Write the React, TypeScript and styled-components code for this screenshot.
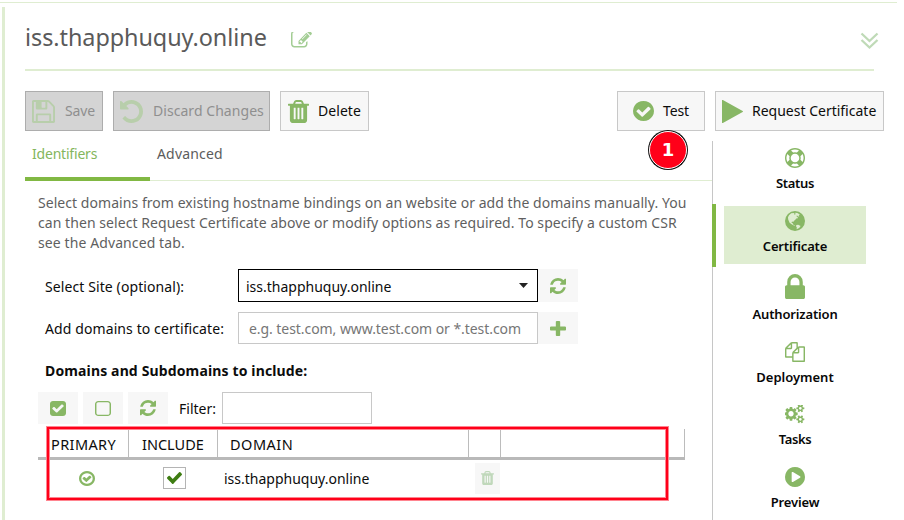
import React from 'react';
import styled, { createGlobalStyle } from 'styled-components';

const GREEN = '#88b765';
const PALE = '#dfedd1';

const GlobalStyle = createGlobalStyle`
  * { box-sizing: border-box; }
  body { margin: 0; background: #fff; overflow: hidden; }
`;

const icons = {
  edit: {
    box: '0 256 1792 1408',
    d: 'M888 1184l116-116-152-152-116 116v56h96v96h56zm440-720q-16-16-33 1l-350 350q-17 17-1 33t33-1l350-350q17-17 1-33zm80 594v190q0 119-84.5 203.5t-203.5 84.5h-832q-119 0-203.5-84.5t-84.5-203.5v-832q0-119 84.5-203.5t203.5-84.5h832q63 0 117 25 15 7 18 23 3 17-9 29l-49 49q-14 14-32 8-23-6-45-6h-832q-66 0-113 47t-47 113v832q0 66 47 113t113 47h832q66 0 113-47t47-113v-126q0-13 9-22l64-64q15-15 35-7t20 29zm-96-738l288 288-672 672h-288v-288zm444 132l-92 92-288-288 92-92q28-28 68-28t68 28l152 152q28 28 28 68t-28 68z',
  },
  save: {
    box: '128 128 1536 1536',
    d: 'M512 1536h768v-384h-768v384zm896 0h128v-896q0-14-10-38.5t-20-34.5l-281-281q-10-10-34-20t-39-10v416q0 40-28 68t-68 28h-576q-40 0-68-28t-28-68v-416h-128v1280h128v-416q0-40 28-68t68-28h832q40 0 68 28t28 68v416zm-384-928v-320q0-13-9.5-22.5t-22.5-9.5h-192q-13 0-22.5 9.5t-9.5 22.5v320q0 13 9.5 22.5t22.5 9.5h192q13 0 22.5-9.5t9.5-22.5zm640 32v928q0 40-28 68t-68 28h-1344q-40 0-68-28t-28-68v-1344q0-40 28-68t68-28h928q40 0 88 20t76 48l280 280q28 28 48 76t20 88z',
  },
  undo: {
    box: '128 128 1536 1536',
    d: 'M1664 896q0 156-61 298t-164 245-245 164-298 61q-172 0-327-72.5t-264-204.5q-7-10-6.5-22.5t8.5-20.5l137-138q10-9 25-9 16 2 23 12 73 95 179 147t225 52q104 0 198.5-40.5t163.5-109.5 109.5-163.5 40.5-198.5-40.5-198.5-109.5-163.5-163.5-109.5-198.5-40.5q-98 0-188 35.5t-160 101.5l137 138q31 30 14 69-17 40-59 40h-448q-26 0-45-19t-19-45v-448q0-42 40-59 39-17 69 14l130 129q107-101 244.5-156.5t284.5-55.5q156 0 298 61t245 164 164 245 61 298z',
  },
  trash: {
    box: '192 128 1408 1536',
    d: 'M704 1376v-704q0-14-9-23t-23-9h-64q-14 0-23 9t-9 23v704q0 14 9 23t23 9h64q14 0 23-9t9-23zm256 0v-704q0-14-9-23t-23-9h-64q-14 0-23 9t-9 23v704q0 14 9 23t23 9h64q14 0 23-9t9-23zm256 0v-704q0-14-9-23t-23-9h-64q-14 0-23 9t-9 23v704q0 14 9 23t23 9h64q14 0 23-9t9-23zm-544-992h448l-48-117q-7-9-17-11h-317q-10 2-17 11zm928 32v64q0 14-9 23t-23 9h-96v948q0 83-47 143.5t-113 60.5h-832q-66 0-113-58.5t-47-141.5v-952h-96q-14 0-23-9t-9-23v-64q0-14 9-23t23-9h309l70-167q15-37 54-63t79-26h320q40 0 79 26t54 63l70 167h309q14 0 23 9t9 23z',
  },
  checkCircle: {
    box: '128 128 1536 1536',
    d: 'M1412 734q0-28-18-46l-91-90q-19-19-45-19t-45 19l-408 407-226-226q-19-19-45-19t-45 19l-91 90q-18 18-18 46 0 27 18 45l362 362q19 19 45 19 27 0 46-19l543-543q18-18 18-45zm252 162q0 209-103 385.5t-279.5 279.5-385.5 103-385.5-103-279.5-279.5-103-385.5 103-385.5 279.5-279.5 385.5-103 385.5 103 279.5 279.5 103 385.5z',
  },
  play: {
    box: '192 128 1408 1536',
    d: 'M1576 927l-1328 738q-23 13-39.5 3t-16.5-36v-1472q0-26 16.5-36t39.5 3l1328 738q23 13 23 31t-23 31z',
  },
  lifeRing: {
    box: '0 0 1792 1792',
    d: 'M896 0q182 0 348 71t286 191 191 286 71 348-71 348-191 286-286 191-348 71-348-71-286-191-191-286-71-348 71-348 191-286 286-191 348-71zm0 128q-190 0-361 90l194 194q82-28 167-28t167 28l194-194q-171-90-361-90zm-678 1129l194-194q-28-82-28-167t28-167l-194-194q-90 171-90 361t90 361zm678 407q190 0 361-90l-194-194q-82 28-167 28t-167-28l-194 194q171 90 361 90zm0-384q159 0 271.5-112.5t112.5-271.5-112.5-271.5-271.5-112.5-271.5 112.5-112.5 271.5 112.5 271.5 271.5 112.5zm484-217l194 194q90-171 90-361t-90-361l-194 194q28 82 28 167t-28 167z',
  },
  globe: {
    box: '0 0 20 20',
    d: 'M10 0a10 10 0 1 0 0 20a10 10 0 0 0 0-20zM6.2 2.3L8.7 2L9.6 2.8L8.9 3.7L10.6 3.3L10.2 1.7L12.3 1.9L15 3.6L13.7 4.1L14.4 5.2L13.1 5.6L12.1 4.6L11.2 5.1L12.7 6.2L12.9 7.3L11.2 7.5L10.1 9L8.7 10.1L8.4 11.1L7 10.6L6.5 11.8L7.8 12.2L8 13.4L9.9 14.3L9.4 14.8L7 13.6L4.6 11.8L3.2 8.4L3 6.2L4 4.2zM11.4 14L13.2 13.7L15.6 15.1L14.2 17L11.6 18.3L11.8 16.3L11 15.2z',
  },
  lock: {
    box: '320 128 1152 1408',
    d: 'M640 768h512v-192q0-106-75-181t-181-75-181 75-75 181v192zm832 96v576q0 40-28 68t-68 28h-960q-40 0-68-28t-28-68v-576q0-40 28-68t68-28h32v-192q0-184 132-316t316-132 316 132 132 316v192h32q40 0 68 28t28 68z',
  },
  copy: {
    box: '0 0 1792 1792',
    d: 'M1696 384q40 0 68 28t28 68v1216q0 40-28 68t-68 28h-960q-40 0-68-28t-28-68v-288h-544q-40 0-68-28t-28-68v-672q0-40 20-88t48-76l408-408q28-28 76-48t88-20h416q40 0 68 28t28 68v328q68-40 128-40h416zm-544 213l-299 299h299v-299zm-640-384l-299 299h299v-299zm196 647l316-316v-416h-384v416q0 40-28 68t-68 28h-416v640h512v-256q0-40 20-88t48-76zm956 804v-1152h-384v416q0 40-28 68t-68 28h-416v640h896z',
  },
  cogs: {
    box: '0 80 1920 1760',
    d: 'M832 896q0-106-75-181t-181-75-181 75-75 181 75 181 181 75 181-75 75-181zm768 512q0-52-38-90t-90-38-90 38-38 90q0 53 37.5 90.5t90.5 37.5 90.5-37.5 37.5-90.5zm0-1024q0-52-38-90t-90-38-90 38-38 90q0 53 37.5 90.5t90.5 37.5 90.5-37.5 37.5-90.5zm-384 421v185q0 10-7 19.5t-16 10.5l-155 24q-11 35-32 76 34 48 90 115 7 11 7 20 0 12-7 19-23 30-82.5 89.5t-78.5 59.5q-11 0-21-7l-115-90q-37 19-77 31-11 108-23 155-7 24-30 24h-186q-11 0-20-7.5t-10-17.5l-23-153q-34-10-75-31l-118 89q-7 7-20 7-11 0-21-8-144-133-144-160 0-9 7-19 10-14 41-53t47-61q-23-44-35-82l-152-24q-10-1-17-9.5t-7-19.5v-185q0-10 7-19.5t16-10.5l155-24q11-35 32-76-34-48-90-115-7-11-7-20 0-12 7-20 22-30 82-89t79-59q11 0 21 7l115 90q34-18 77-32 11-108 23-154 7-24 30-24h186q11 0 20 7.5t10 17.5l23 153q34 10 75 31l118-89q8-7 20-7 11 0 21 8 144 133 144 160 0 8-7 19-12 16-42 54t-45 60q23 48 34 82l152 23q10 2 17 10.5t7 19.5zm640 533v140q0 16-149 31-12 27-30 52 51 113 51 138 0 4-4 7-122 71-124 71-8 0-46-47t-52-68q-20 2-30 2t-30-2q-14 21-52 68t-46 47q-2 0-124-71-4-3-4-7 0-25 51-138-18-25-30-52-149-15-149-31v-140q0-16 149-31 13-29 30-52-51-113-51-138 0-4 4-7 4-2 35-20t59-34 30-16q8 0 46 46.5t52 67.5q20-2 30-2t30 2q51-71 92-112l6-2q4 0 124 70 4 3 4 7 0 25-51 138 17 23 30 52 149 15 149 31zm0-1024v140q0 16-149 31-12 27-30 52 51 113 51 138 0 4-4 7-122 71-124 71-8 0-46-47t-52-68q-20 2-30 2t-30-2q-14 21-52 68t-46 47q-2 0-124-71-4-3-4-7 0-25 51-138-18-25-30-52-149-15-149-31v-140q0-16 149-31 13-29 30-52-51-113-51-138 0-4 4-7 4-2 35-20t59-34 30-16q8 0 46 46.5t52 67.5q20-2 30-2t30 2q51-71 92-112l6-2q4 0 124 70 4 3 4 7 0 25-51 138 17 23 30 52 149 15 149 31z',
  },
  playCircle: {
    box: '128 128 1536 1536',
    d: 'M896 128q209 0 385.5 103t279.5 279.5 103 385.5-103 385.5-279.5 279.5-385.5 103-385.5-103-279.5-279.5-103-385.5 103-385.5 279.5-279.5 385.5-103zm384 823q32-18 32-55t-32-55l-544-320q-31-19-64-1-32 19-32 56v640q0 37 32 56 16 8 32 8 17 0 32-9z',
  },
  refresh: {
    box: '128 128 1536 1536',
    d: 'M1639 1056q0 5-1 7-64 268-268 434.5t-478 166.5q-146 0-282.5-55t-243.5-157l-129 129q-19 19-45 19t-45-19-19-45v-448q0-26 19-45t45-19h448q26 0 45 19t19 45-19 45l-137 137q71 66 161 102t187 36q134 0 250-65t186-179q11-17 53-117 8-23 30-23h192q13 0 22.5 9.5t9.5 22.5zm25-800v448q0 26-19 45t-45 19h-448q-26 0-45-19t-19-45 19-45l138-138q-148-137-349-137-134 0-250 65t-186 179q-11 17-53 117-8 23-30 23h-199q-13 0-22.5-9.5t-9.5-22.5v-7q65-268 270-434.5t480-166.5q146 0 284 55.5t245 156.5l130-129q19-19 45-19t45 19 19 45z',
  },
  plus: {
    box: '192 128 1408 1408',
    d: 'M1600 736v192q0 40-28 68t-68 28h-416v416q0 40-28 68t-68 28h-192q-40 0-68-28t-28-68v-416h-416q-40 0-68-28t-28-68v-192q0-40 28-68t68-28h416v-416q0-40 28-68t68-28h192q40 0 68 28t28 68v416h416q40 0 68 28t28 68z',
  },
  checkSquare: {
    box: '128 128 1536 1536',
    d: 'M813 1299l614-614q19-19 19-45t-19-45l-102-102q-19-19-45-19t-45 19l-467 467-211-211q-19-19-45-19t-45 19l-102 102q-19 19-19 45t19 45l358 358q19 19 45 19t45-19zm851-883v960q0 119-84.5 203.5t-203.5 84.5h-960q-119 0-203.5-84.5t-84.5-203.5v-960q0-119 84.5-203.5t203.5-84.5h960q119 0 203.5 84.5t84.5 203.5z',
  },
  square: {
    box: '192 128 1408 1408',
    d: 'M1312 256h-832q-66 0-113 47t-47 113v832q0 66 47 113t113 47h832q66 0 113-47t47-113v-832q0-66-47-113t-113-47zm288 160v832q0 119-84.5 203.5t-203.5 84.5h-832q-119 0-203.5-84.5t-84.5-203.5v-832q0-119 84.5-203.5t203.5-84.5h832q119 0 203.5 84.5t84.5 203.5z',
  },
  checkRing: {
    box: '128 128 1536 1536',
    d: 'M1299 813l-422 422q-19 19-45 19t-45-19l-294-294q-19-19-19-45t19-45l102-102q19-19 45-19t45 19l147 147 275-275q19-19 45-19t45 19l102 102q19 19 19 45t-19 45zm141 83q0-148-73-273t-198-198-273-73-273 73-198 198-73 273 73 273 198 198 273 73 273-73 198-198 73-273zm224 0q0 209-103 385.5t-279.5 279.5-385.5 103-385.5-103-279.5-279.5-103-385.5 103-385.5 279.5-279.5 385.5-103 385.5 103 279.5 279.5 103 385.5z',
  },
  check: {
    box: '121 334 1550 1188',
    d: 'M1671 566q0 40-28 68l-724 724-136 136q-28 28-68 28t-68-28l-136-136-362-362q-28-28-28-68t28-68l136-136q28-28 68-28t68 28l294 295 656-657q28-28 68-28t68 28l136 136q28 28 28 68z',
  },
  caret: { box: '0 0 10 5', d: 'M0 0h10l-5 5z' },
};

type IconName = keyof typeof icons;

const Svg = styled.svg<{ $w: number; $h: number; $color?: string }>`
  display: block;
  flex: none;
  width: ${p => p.$w}px;
  height: ${p => p.$h}px;
  fill: ${p => p.$color ?? GREEN};
`;

function Icon({ name, w, h, color }: { name: IconName; w: number; h?: number; color?: string }) {
  return (
    <Svg viewBox={icons[name].box} preserveAspectRatio="none" $w={w} $h={h ?? w} $color={color}>
      <path d={icons[name].d} fillRule="evenodd" />
    </Svg>
  );
}

const Page = styled.div`
  width: 904px;
  height: 520px;
  padding-top: 2px;
  overflow: hidden;
  background: #fff;
  color: #0c0c0c;
  font: 14px/20px 'Noto Sans', 'Open Sans', sans-serif;
`;

const TopRule = styled.div`
  width: 897px;
  height: 1px;
  background: ${PALE};
`;

const Panel = styled.div`
  height: 513px;
  margin: 4px 0 0 2px;
  padding-left: 20px;
  border-left: 3px solid ${PALE};
`;

const Header = styled.header`
  display: flex;
  align-items: center;
  width: 849px;
  height: 64px;
  border-bottom: 2px solid ${PALE};
`;

const Title = styled.h1`
  width: 266px;
  margin: 0;
  padding-bottom: 3px;
  color: #5a5a5a;
  font-size: 23.4px;
  font-weight: 400;
  line-height: 32px;
  letter-spacing: -0.05px;
`;

const EditButton = styled.span`
  margin-top: 4px;
`;

const Chevrons = styled.svg`
  width: 19px;
  height: 18px;
  margin: 5px -5px 0 auto;
  fill: none;
  stroke: #bfdab7;
  stroke-width: 2.3;
`;

const Toolbar = styled.div`
  display: flex;
  gap: 10px;
  width: 859px;
  margin-top: 20px;
`;

const Spacer = styled.div`
  flex: 1;
`;

const ToolButton = styled.button<{ $w: number; $pad: number; $gap: number; $ls?: number }>`
  position: relative;
  display: flex;
  align-items: center;
  gap: ${p => p.$gap}px;
  width: ${p => p.$w}px;
  height: 40px;
  padding: 0 0 0 ${p => p.$pad}px;
  border: 1px solid #c8c8c8;
  background: #f7f7f7;
  color: #0c0c0c;
  font: inherit;
  letter-spacing: ${p => p.$ls ?? 0}px;
  white-space: nowrap;

  &:disabled {
    border-color: #adadad;
    background: #d4d4d4;
    color: #8f8f8f;
  }
`;

const StepBadge = styled.span`
  position: absolute;
  top: 39px;
  left: 31px;
  z-index: 2;
  display: grid;
  place-items: center;
  width: 38px;
  height: 38px;
  border: 1px solid #fff;
  border-radius: 50%;
  background: #ff0019;
  box-shadow: 0 0 0 1px #111;
  color: #fff;
  font: 700 18px/20px 'DejaVu Sans', sans-serif;
`;

const Body = styled.div`
  display: flex;
  height: 389px;
`;

const Content = styled.main`
  width: 687px;
  padding-top: 20px;
`;

const Tabs = styled.div`
  display: flex;
  height: 40px;
  margin-top: -10px;
  background: linear-gradient(${PALE}, ${PALE}) bottom / 100% 1px no-repeat;
`;

const Tab = styled.div<{ $active?: boolean }>`
  width: 125px;
  padding: 3px 0 0 7px;
  border-bottom: 4px solid ${p => (p.$active ? '#81b843' : 'transparent')};
  color: ${p => (p.$active ? '#84b65d' : '#5c5c5c')};
  letter-spacing: ${p => (p.$active ? -0.2 : 0.17)}px;
`;

const Intro = styled.p`
  margin: 12px 0 0 13px;
  color: #5f5f5f;
  letter-spacing: 0.05px;
  white-space: nowrap;
`;

const Line = styled.span<{ $ls?: number }>`
  display: block;
  letter-spacing: ${p => p.$ls ?? 0.05}px;
`;

const Field = styled.div<{ $top: number; $h: number }>`
  display: grid;
  grid-template-columns: 193px 300px 40px;
  height: ${p => p.$h}px;
  margin: ${p => p.$top}px 0 0 20px;
`;

const Label = styled.label`
  align-self: center;
  padding-top: 2px;
  letter-spacing: 0.1px;
`;

const Combo = styled.div`
  display: flex;
  align-items: center;
  justify-content: space-between;
  padding: 2px 9px 0 7px;
  border: 1px solid #000;
`;

const Caret = styled.span`
  padding-bottom: 3px;
`;

const Input = styled.input`
  width: 300px;
  height: 32px;
  padding: 1px 10px 0;
  border: 1px solid #c8c8c8;
  outline: 0;
  background: #fff;
  font: inherit;
  letter-spacing: -0.06px;

  &::placeholder {
    color: #767676;
  }
`;

const FilterInput = styled(Input)`
  width: 150px;
`;

const Tile = styled.span`
  display: grid;
  place-items: center;
  width: 40px;
  background: #f7f7f7;
`;

const SectionTitle = styled.h2`
  margin: 17px 0 0 20px;
  font-size: 14px;
  line-height: 20px;
  letter-spacing: 0.14px;
`;

const FilterBar = styled.div`
  display: flex;
  gap: 5px;
  height: 32px;
  margin: 11px 0 0 13px;
`;

const FilterLabel = styled.label`
  width: 44px;
  padding: 7px 0 0 6px;
`;

const Table = styled.div`
  position: relative;
  width: 647px;
  margin: 5px 0 0 13px;
`;

const columns = '91px 89px 251px 32px 184px';

const HeadRow = styled.div`
  display: grid;
  grid-template-columns: ${columns};
  height: 31px;
  border-bottom: 3px solid #b9b9b9;
`;

const HeadCell = styled.div<{ $pad?: number; $ls?: number }>`
  padding: 5px 0 0 ${p => p.$pad ?? 13}px;
  border-right: 1px solid #bcbcbc;
  font-size: 14.5px;
  letter-spacing: ${p => p.$ls ?? 0}px;
`;

const DataRow = styled.div`
  display: grid;
  grid-template-columns: ${columns};
  align-items: center;
  height: 36px;
`;

const Primary = styled.div`
  padding-left: 41px;
`;

const CheckBox = styled.div`
  display: grid;
  place-items: center;
  width: 23px;
  height: 22px;
  margin: 0 0 1px 34px;
  border: 1px solid #b4b4b4;
`;

const Domain = styled.div`
  padding: 2px 0 0 6px;
`;

const RowDelete = styled.div`
  display: grid;
  place-items: center;
  width: 25px;
  height: 31px;
  margin-left: 6px;
  background: #f7f7f7;
`;

const Highlight = styled.div`
  position: absolute;
  top: -2px;
  left: 9px;
  width: 621px;
  height: 73px;
  border: 2px solid #ff0019;
  box-shadow: 0 0 0 1px #ff8590, inset 0 0 0 1px #ff8590;
`;

const Side = styled.nav`
  width: 154px;
  height: 379px;
  margin-top: 10px;
  border-left: 1px solid #c6c6c6;
`;

const SideItem = styled.div<{ $active?: boolean }>`
  margin-left: -1px;
  padding: ${p => (p.$active ? '2px 0 3px 8px' : '2px 0 3px 12px')};
  border-left: ${p => (p.$active ? '4px solid #81b843' : '0')};
`;

const SideLink = styled.div<{ $active?: boolean; $ls: number }>`
  display: flex;
  flex-direction: column;
  align-items: center;
  width: 142px;
  padding: 5px 0 8px;
  background: ${p => (p.$active ? PALE : 'transparent')};
  color: #080808;
  font-size: 13px;
  font-weight: 600;
  line-height: 20px;
  letter-spacing: ${p => p.$ls}px;
`;

const SideLabel = styled.span`
  margin-top: 5px;
`;

const sections: { label: string; icon: IconName; h?: number; ls: number; active?: boolean }[] = [
  { label: 'Status', icon: 'lifeRing', ls: -0.3 },
  { label: 'Certificate', icon: 'globe', ls: -0.14, active: true },
  { label: 'Authorization', icon: 'lock', h: 25, ls: -0.15 },
  { label: 'Deployment', icon: 'copy', ls: -0.02 },
  { label: 'Tasks', icon: 'cogs', h: 19, ls: -0.4 },
  { label: 'Preview', icon: 'playCircle', ls: -0.14 },
];

export default function App() {
  return (
    <Page>
      <GlobalStyle />
      <TopRule />
      <Panel>
        <Header>
          <Title>iss.thapphuquy.online</Title>
          <EditButton>
            <Icon name="edit" w={21} h={17} color="#a3cd94" />
          </EditButton>
          <Chevrons viewBox="0 0 19 18">
            <path d="M1.5 1.5l8 7.5 8-7.5M1.5 8l8 7.5 8-7.5" />
          </Chevrons>
        </Header>
        <Toolbar>
          <ToolButton disabled $w={78} $pad={6} $gap={10} $ls={-0.1}>
            <Icon name="save" w={23} color="#b8ceab" />
            Save
          </ToolButton>
          <ToolButton disabled $w={157} $pad={6} $gap={10} $ls={0.05}>
            <Icon name="undo" w={23} color="#b8ceab" />
            Discard Changes
          </ToolButton>
          <ToolButton $w={89} $pad={7} $gap={9} $ls={0.05}>
            <Icon name="trash" w={21} h={23} />
            Delete
          </ToolButton>
          <Spacer />
          <ToolButton $w={88} $pad={15} $gap={9} $ls={-0.1}>
            <Icon name="checkCircle" w={21} h={20} />
            Test
            <StepBadge>1</StepBadge>
          </ToolButton>
          <ToolButton $w={169} $pad={6} $gap={9}>
            <Icon name="play" w={21} h={23} />
            Request Certificate
          </ToolButton>
        </Toolbar>
        <Body>
          <Content>
            <Tabs>
              <Tab $active>Identifiers</Tab>
              <Tab>Advanced</Tab>
            </Tabs>
            <Intro>
              <Line>Select domains from existing hostname bindings on an website or add the domains manually. You</Line>
              <Line $ls={0.06}>can then select Request Certificate above or modify options as required. To specify a custom CSR</Line>
              <Line $ls={0.1}>see the Advanced tab.</Line>
            </Intro>
            <Field $top={16} $h={33}>
              <Label>Select Site (optional):</Label>
              <Combo>
                iss.thapphuquy.online
                <Caret>
                  <Icon name="caret" w={9} h={5} color="#222" />
                </Caret>
              </Combo>
              <Tile>
                <Icon name="refresh" w={16} />
              </Tile>
            </Field>
            <Field $top={10} $h={32}>
              <Label>Add domains to certificate:</Label>
              <Input placeholder="e.g. test.com, www.test.com or *.test.com" />
              <Tile>
                <Icon name="plus" w={16} h={15} />
              </Tile>
            </Field>
            <SectionTitle>Domains and Subdomains to include:</SectionTitle>
            <FilterBar>
              <Tile>
                <Icon name="checkSquare" w={16} h={15} />
              </Tile>
              <Tile>
                <Icon name="square" w={16} h={15} />
              </Tile>
              <Tile>
                <Icon name="refresh" w={16} />
              </Tile>
              <FilterLabel>Filter:</FilterLabel>
              <FilterInput />
            </FilterBar>
            <Table>
              <HeadRow>
                <HeadCell $ls={0.4}>PRIMARY</HeadCell>
                <HeadCell>INCLUDE</HeadCell>
                <HeadCell $pad={12} $ls={0.5}>DOMAIN</HeadCell>
                <HeadCell />
                <HeadCell />
              </HeadRow>
              <DataRow>
                <Primary>
                  <Icon name="checkRing" w={16} h={15} />
                </Primary>
                <CheckBox>
                  <Icon name="check" w={15} h={12} color="#3e7d12" />
                </CheckBox>
                <Domain>iss.thapphuquy.online</Domain>
                <RowDelete>
                  <Icon name="trash" w={13} h={14} color="#c0d8bb" />
                </RowDelete>
              </DataRow>
              <Highlight />
            </Table>
          </Content>
          <Side>
            {sections.map(s => (
              <SideItem key={s.label} $active={s.active}>
                <SideLink $active={s.active} $ls={s.ls}>
                  <Icon name={s.icon} w={20} h={s.h} />
                  <SideLabel>{s.label}</SideLabel>
                </SideLink>
              </SideItem>
            ))}
          </Side>
        </Body>
      </Panel>
    </Page>
  );
}
